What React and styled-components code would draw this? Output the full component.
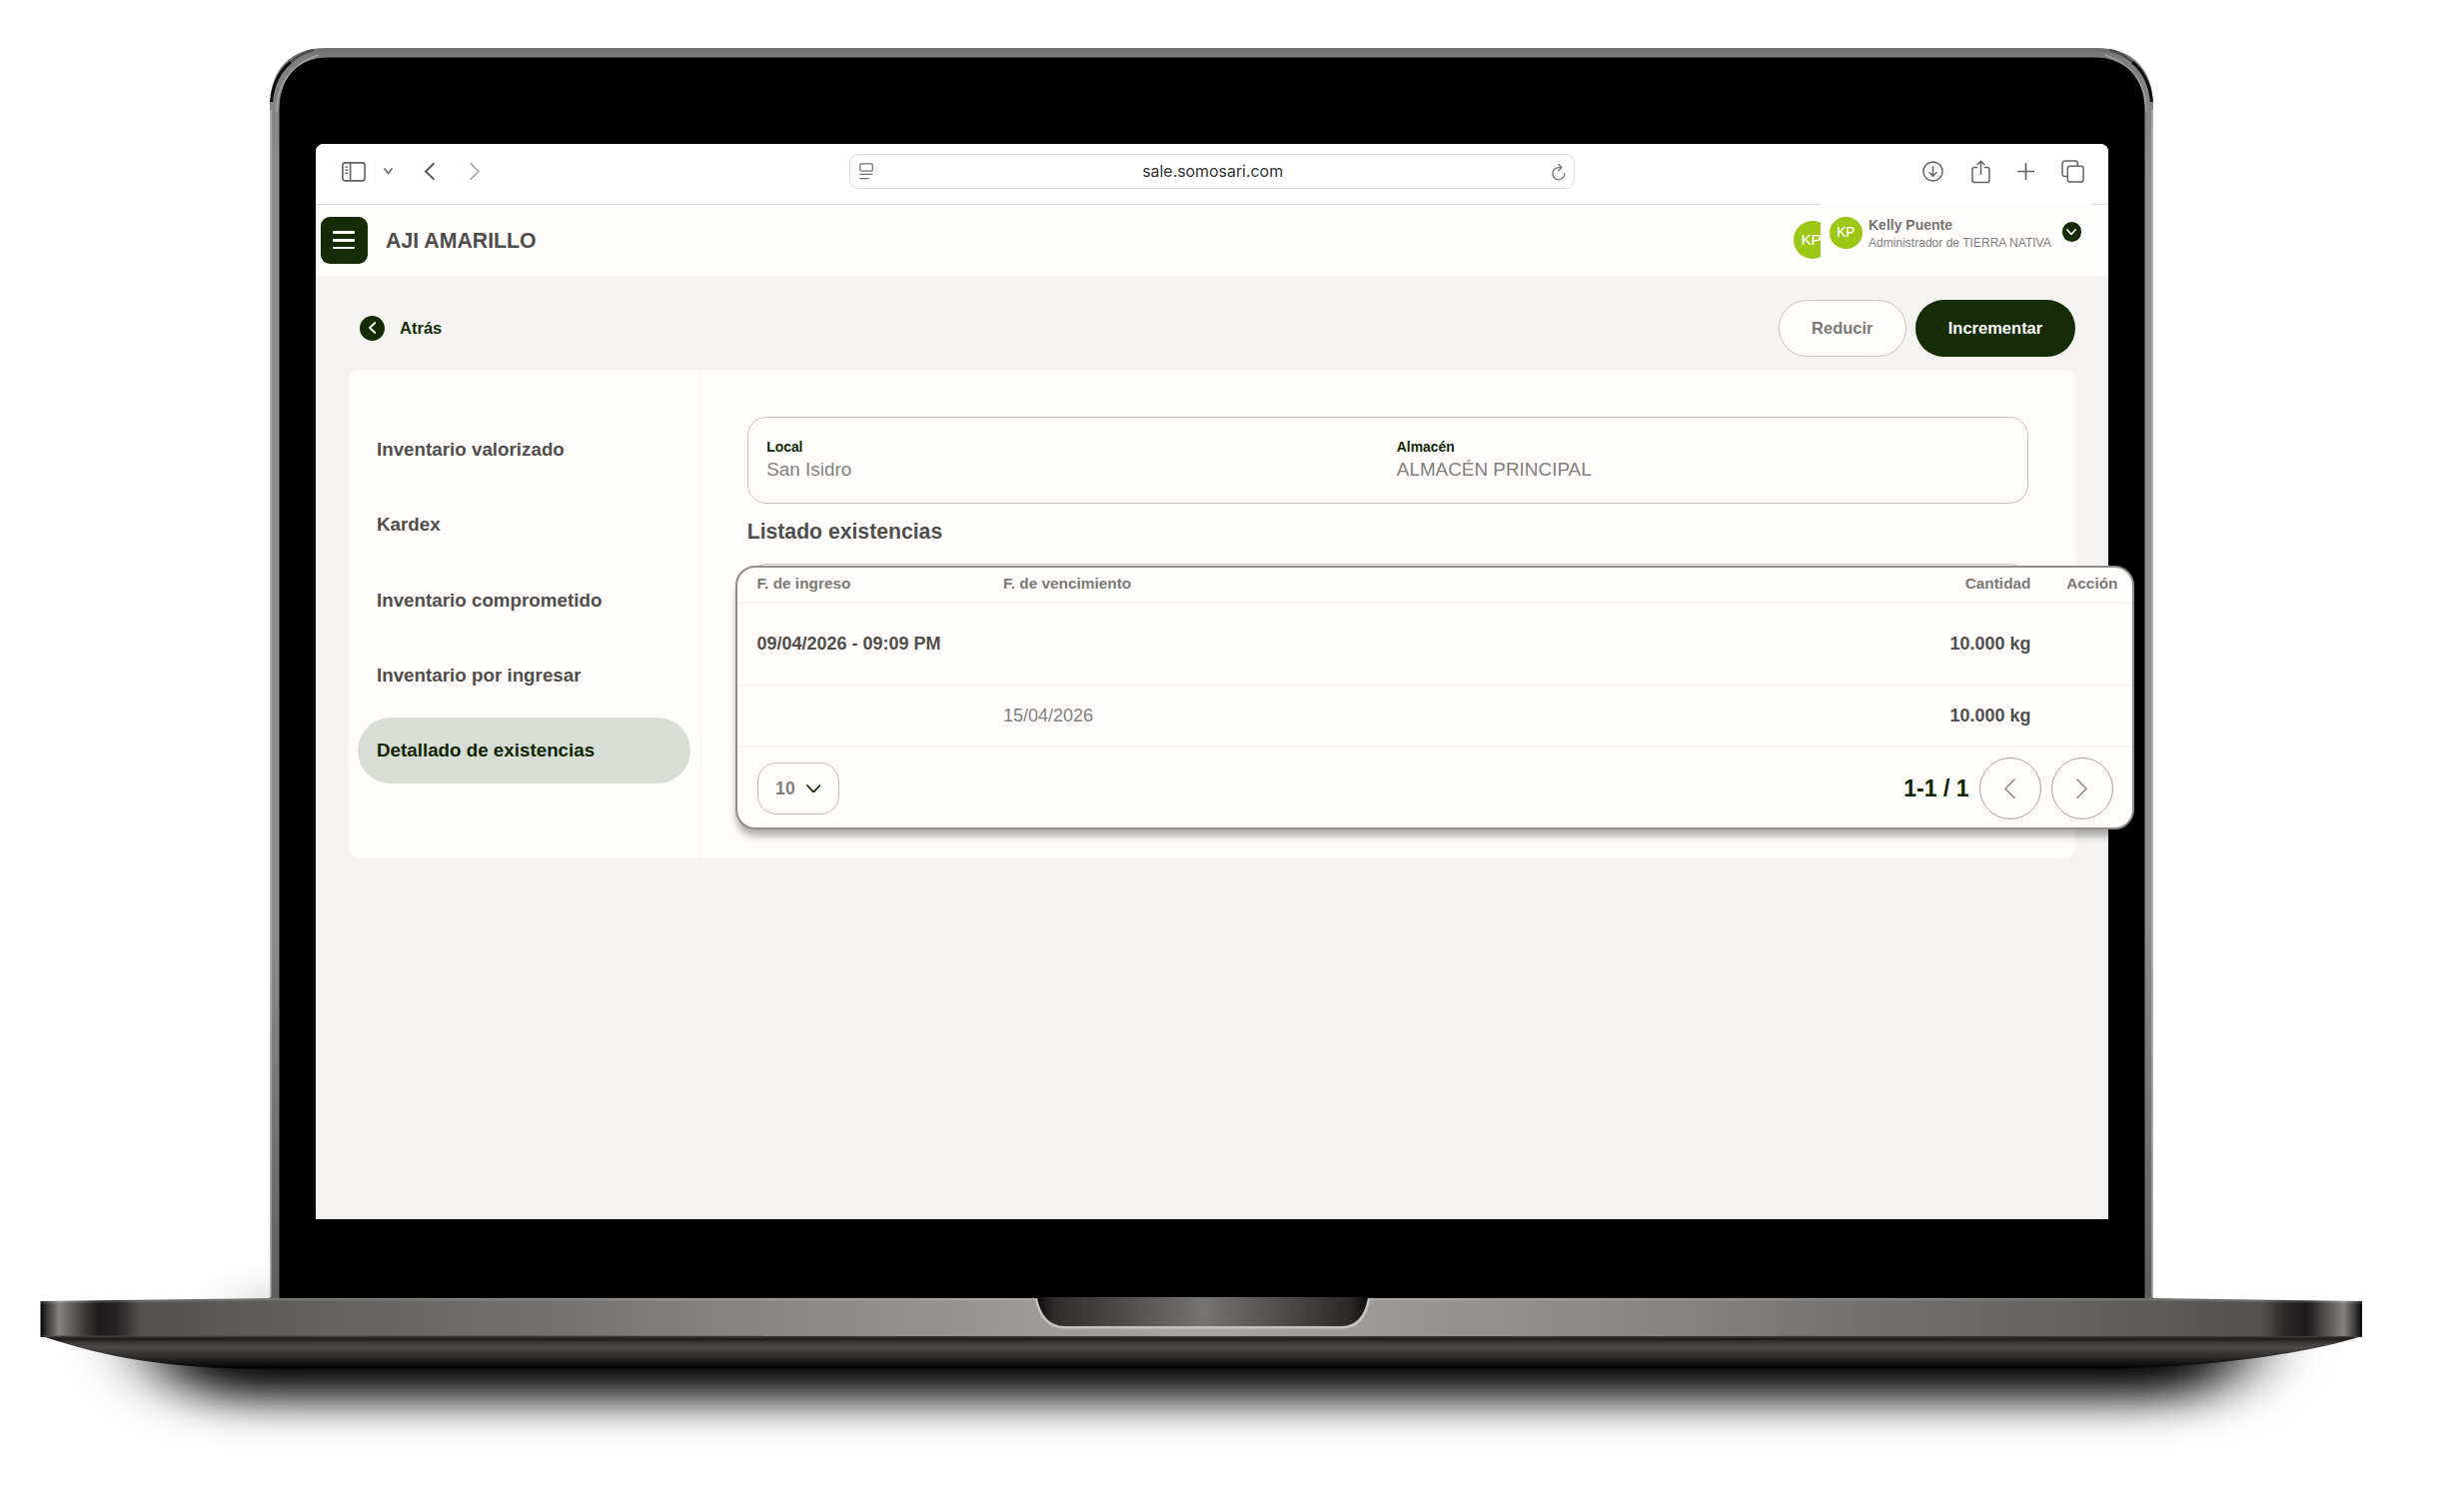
import styled, { createGlobalStyle, css } from "styled-components";

const GlobalStyle = createGlobalStyle`
  * {
    box-sizing: border-box;
  }

  body {
    margin: 0;
    background-color: #fff;
    font-family: "Liberation Sans", Arial, sans-serif;
  }
`;

const dark = "#152c06";
const paper = "#fefdfb";

const Stage = styled.div`
  position: relative;
  width: 2466px;
  height: 1512px;
  padding: 144px 0 0 316px;
  overflow: hidden;
  background-color: #fff;
`;

const LaptopArt = styled.svg`
  position: absolute;
  top: 0;
  left: 0;
`;

const Screen = styled.main`
  position: relative;
  width: 1794px;
  height: 1076px;
  display: flex;
  flex-direction: column;
  overflow: hidden;
  border-radius: 8px 8px 0 0;
  background-color: #f4f3f1;
`;

/* browser bar */
const Toolbar = styled.div`
  height: 61px;
  flex: none;
  display: grid;
  grid-template-columns: 533.6px 726.6px 1fr;
  align-items: center;
  padding-bottom: 5px;
  background-color: #fff;
  border-bottom: 1.5px solid #dedfdf;
`;

const NavIcons = styled.div`
  display: flex;
  align-items: center;
  padding-left: 26px;

  svg {
    display: block;
  }
`;

const Separator = styled.span`
  width: 1px;
  height: 23px;
  margin: 0 8px 0 8.5px;
  background-color: #f0f0f0;
`;

const NavArrow = styled.svg`
  margin-left: ${(props) => props.$gap}px;
`;

const AddressBar = styled.div`
  height: 35.5px;
  display: flex;
  align-items: center;
  justify-content: space-between;
  padding: 0 8px 0 9.5px;
  border: 1.6px solid #dcdcdc;
  border-radius: 9px;

  svg {
    display: block;
  }
`;

const Url = styled.span`
  margin-top: 1px;
  font-family: Inter, sans-serif;
  font-size: 15.9px;
  line-height: 22px;
  color: #333;
`;

const ToolIcons = styled.div`
  display: flex;
  align-items: center;
  justify-content: flex-end;
  gap: 27.2px;
  padding-right: 24px;

  svg {
    display: block;
  }
`;

/* app header */
const Header = styled.header`
  height: 70.5px;
  flex: none;
  display: flex;
  align-items: center;
  padding-left: 5px;
  background-color: ${paper};
`;

const MenuButton = styled.button`
  width: 46.5px;
  height: 47px;
  padding: 0;
  display: flex;
  flex-direction: column;
  align-items: center;
  justify-content: center;
  gap: 5px;
  border: none;
  border-radius: 9px;
  background-color: ${dark};
`;

const MenuLine = styled.span`
  width: 22px;
  height: 2.6px;
  border-radius: 1px;
  background-color: #fff;
`;

const Title = styled.h1`
  margin: 1px 0 0 18.5px;
  font-size: 21.3px;
  line-height: 28px;
  color: #4f4d4b;
`;

const Avatar = styled.div`
  width: ${(props) => props.$size}px;
  height: ${(props) => props.$size}px;
  flex: none;
  display: flex;
  align-items: center;
  justify-content: center;
  border-radius: 50%;
  background-color: #9dc716;
  color: #fff;
  font-size: ${(props) => props.$font}px;
  letter-spacing: -0.3px;
  -webkit-text-stroke: 0.15px #fff;
`;

const HeaderAvatar = styled(Avatar)`
  margin: 0 277px 0 auto;
  padding-right: 3px;
`;

/* floats over the toolbar edge and the avatar in the header */
const ProfileCard = styled.div`
  position: absolute;
  top: 59px;
  left: 1506px;
  width: 272px;
  height: 57px;
  display: flex;
  align-items: flex-start;
  padding: 13.5px 11px 0 9px;
  background-color: ${paper};
`;

const ProfileText = styled.div`
  margin: -2px auto 0 6.5px;
  white-space: nowrap;
`;

const ProfileName = styled.div`
  font-size: 14px;
  font-weight: bold;
  line-height: 20px;
  color: #757371;
`;

const ProfileRole = styled.div`
  margin-top: -1px;
  font-size: 12.05px;
  line-height: 18px;
  color: #7f7d7c;
`;

const RoundIcon = styled.span`
  width: ${(props) => props.$size}px;
  height: ${(props) => props.$size}px;
  margin-top: ${(props) => props.$top || 0}px;
  flex: none;
  display: flex;
  align-items: center;
  justify-content: center;
  border-radius: 50%;
  background-color: ${dark};
`;

/* page */
const Actions = styled.div`
  display: flex;
  align-items: center;
  padding: 24px 33px 13.1px 44.1px;
`;

const BackLink = styled.div`
  display: flex;
  align-items: center;
  gap: 15px;
  margin-right: auto;
  font-size: 16.5px;
  font-weight: bold;
  color: ${dark};
`;

const Button = styled.button`
  width: ${(props) => props.$width}px;
  height: 57.4px;
  padding: 0;
  margin-left: 9px;
  border-radius: 29px;
  font-family: inherit;
  font-size: 16.5px;
  font-weight: bold;
  ${(props) =>
    props.$primary
      ? css`
          border: none;
          background-color: ${dark};
          color: #fff;
        `
      : css`
          border: 1.5px solid #c6c5c4;
          background-color: ${paper};
          color: #7b7977;
        `}
`;

const Card = styled.section`
  height: 488.7px;
  display: flex;
  margin: 0 33px 0 32.8px;
  border-radius: 9px;
  background-color: ${paper};
`;

const SideMenu = styled.nav`
  width: 352px;
  flex: none;
  display: flex;
  flex-direction: column;
  gap: 9.1px;
  padding: 47.4px 9px 0 9.2px;
  border-right: 1.5px solid #f4f3f2;
`;

const MenuItem = styled.a`
  height: 66px;
  display: flex;
  align-items: center;
  padding-left: 19px;
  border-radius: 33px;
  font-size: 18.8px;
  font-weight: bold;
  color: ${(props) => (props.$active ? "#0f2503" : "#504e4c")};
  background-color: ${(props) => (props.$active ? "#d8ddd5" : "transparent")};
`;

const Content = styled.div`
  flex: 1;
  padding: 47px 47px 0 46.9px;
`;

const InfoBox = styled.div`
  height: 87px;
  display: grid;
  grid-template-columns: 630.6px 1fr;
  padding: 19px 0 0 18.5px;
  border: 1.5px solid #c4c3c2;
  border-radius: 19px;
`;

const InfoLabel = styled.div`
  font-size: 13.9px;
  font-weight: bold;
  line-height: 20px;
  color: #0f2503;
`;

const InfoValue = styled.div`
  margin-top: 1px;
  font-size: 18.9px;
  line-height: 24px;
  color: #827f7d;
`;

const SectionTitle = styled.h2`
  margin: 14px 0 18px 0;
  font-size: 21.2px;
  line-height: 28px;
  color: #504e4c;
`;

const ListFrame = styled.div`
  height: 200px;
  border: 1.5px solid #c4c3c2;
  border-radius: 19px;
`;

/* enlarged table lying over the screen and the lid */
const TablePopup = styled.section`
  position: absolute;
  top: 566px;
  left: 736px;
  width: 1400px;
  height: 264px;
  overflow: hidden;
  border: 2px solid #8f8e8d;
  border-radius: 20px;
  background-color: ${paper};
  box-shadow: 0 8px 7px -1px rgba(0, 0, 0, 0.3);
`;

const Row = styled.div`
  height: ${(props) => props.$height}px;
  display: grid;
  grid-template-columns: 246.6px 1fr 200px 87px;
  align-items: center;
  padding: 0 14.5px 0 19.4px;
  border-bottom: 1.5px solid #f3f2f1;
`;

const HeadCell = styled.div`
  padding-bottom: 3.4px;
  font-size: 15.4px;
  font-weight: bold;
  color: #7b7977;
  text-align: ${(props) => props.$align || "left"};
`;

const Cell = styled.div`
  font-size: 18px;
  font-weight: ${(props) => (props.$muted ? "normal" : "bold")};
  color: ${(props) => (props.$muted ? "#827f7d" : "#504e4c")};
  text-align: ${(props) => props.$align || "left"};
`;

const Footer = styled.div`
  height: 80px;
  display: flex;
  align-items: center;
  padding: 2px 19px 0 19.6px;
`;

const PageSize = styled.div`
  width: 82px;
  height: 51.5px;
  display: flex;
  align-items: center;
  gap: 11px;
  margin-right: auto;
  padding-left: 17.5px;
  border: 1.5px solid #bebdbc;
  border-radius: 19px;
  font-size: 17.6px;
  font-weight: bold;
  color: #827f7d;
`;

const PageCount = styled.span`
  margin-right: 10.5px;
  font-size: 23px;
  font-weight: bold;
  color: #0f2503;
`;

const PageButton = styled.button`
  width: 62px;
  height: 62px;
  display: flex;
  align-items: center;
  justify-content: center;
  padding: 0 1px 0 0;
  margin-right: ${(props) => props.$gap || 0}px;
  border: 1.5px solid #a3a2a1;
  border-radius: 50%;
  background-color: transparent;
`;

const menu = [
    "Inventario valorizado",
    "Kardex",
    "Inventario comprometido",
    "Inventario por ingresar",
    "Detallado de existencias",
];

const rows = [
    { entry: "09/04/2026 - 09:09 PM", expiry: "", amount: "10.000 kg", height: 82 },
    { entry: "", expiry: "15/04/2026", amount: "10.000 kg", height: 62 },
];

const Chevron = ({ dir = "down", w, h, color, stroke = 2 }) => {
    const points = {
        down: `1,1 ${w / 2},${h - 1} ${w - 1},1`,
        left: `${w - 1},1 1,${h / 2} ${w - 1},${h - 1}`,
        right: `1,1 ${w - 1},${h / 2} 1,${h - 1}`,
    };
    return (
        <svg width={w} height={h} fill="none" stroke={color} strokeWidth={stroke} strokeLinecap="round" strokeLinejoin="round">
            <polyline points={points[dir]} />
        </svg>
    );
};

const Laptop = () => (
    <LaptopArt width="2466" height="1512" viewBox="0 0 2466 1512">
        <defs>
            <linearGradient id="side" x1="0" y1="0" x2="0" y2="1">
                <stop offset="0" stopColor="#6d6f6d" />
                <stop offset="0.008" stopColor="#7e7e7d" />
                <stop offset="0.1" stopColor="#8f8d8d" />
                <stop offset="0.7" stopColor="#8f8d8d" />
                <stop offset="1" stopColor="#5c5d5d" />
            </linearGradient>
            <linearGradient id="strip" gradientUnits="userSpaceOnUse" x1="40.5" y1="0" x2="2364" y2="0">
                <stop offset="0" stopColor="#050505" />
                <stop offset="0.003" stopColor="#3c3b3a" />
                <stop offset="0.008" stopColor="#85827f" />
                <stop offset="0.015" stopColor="#55524f" />
                <stop offset="0.025" stopColor="#1b1919" />
                <stop offset="0.033" stopColor="#262424" />
                <stop offset="0.043" stopColor="#52514f" />
                <stop offset="0.1" stopColor="#5f5e5b" />
                <stop offset="0.23" stopColor="#757371" />
                <stop offset="0.29" stopColor="#868280" />
                <stop offset="0.41" stopColor="#9a9693" />
                <stop offset="0.5" stopColor="#a8a5a2" />
                <stop offset="0.59" stopColor="#9a9693" />
                <stop offset="0.71" stopColor="#868280" />
                <stop offset="0.77" stopColor="#757371" />
                <stop offset="0.9" stopColor="#5f5e5b" />
                <stop offset="0.957" stopColor="#52514f" />
                <stop offset="0.967" stopColor="#2b2a29" />
                <stop offset="0.976" stopColor="#1b1919" />
                <stop offset="0.985" stopColor="#55524f" />
                <stop offset="0.992" stopColor="#85827f" />
                <stop offset="0.997" stopColor="#3c3b3a" />
                <stop offset="1" stopColor="#050505" />
            </linearGradient>
            <linearGradient id="under" x1="0" y1="0" x2="0" y2="1">
                <stop offset="0" stopColor="#4a4644" />
                <stop offset="0.1" stopColor="#1d1c1b" />
                <stop offset="0.2" stopColor="#3a3736" />
                <stop offset="0.35" stopColor="#4c4847" />
                <stop offset="0.6" stopColor="#32312f" />
                <stop offset="0.95" stopColor="#070606" />
                <stop offset="1" stopColor="#050404" />
            </linearGradient>
            <linearGradient id="notch" x1="0" y1="0" x2="1" y2="0">
                <stop offset="0" stopColor="#0c0a0a" />
                <stop offset="0.05" stopColor="#2f2c2b" />
                <stop offset="0.25" stopColor="#4d4a49" />
                <stop offset="0.5" stopColor="#767472" />
                <stop offset="0.75" stopColor="#4d4a49" />
                <stop offset="0.95" stopColor="#2a2726" />
                <stop offset="1" stopColor="#0c0a0a" />
            </linearGradient>
            <radialGradient id="haze" cx="1" cy="1" r="1">
                <stop offset="0" stopColor="#000" stopOpacity="0.11" />
                <stop offset="0.5" stopColor="#000" stopOpacity="0.035" />
                <stop offset="1" stopColor="#000" stopOpacity="0" />
            </radialGradient>
            <filter id="soft" filterUnits="userSpaceOnUse" x="0" y="1200" width="2466" height="312">
                <feGaussianBlur stdDeviation="38 22" />
            </filter>
            <clipPath id="floor">
                <rect x="0" y="1350" width="2466" height="162" />
            </clipPath>
        </defs>

        <g clipPath="url(#floor)">
            <path d="M140 1320H2260C2250 1372 2220 1400 2160 1400H242C182 1400 152 1372 140 1320Z" filter="url(#soft)" />
        </g>
        <rect x="190" y="1262" width="80" height="38" fill="url(#haze)" />

        <path d="M270 1299V106C270 68 292 48 326 48H2099C2133 48 2155 68 2155 106V1299Z" fill="url(#side)" />
        <path d="M271.6 102C273 84 280 71 291 62" fill="none" stroke="#0c0c0c" strokeWidth="3" />
        <path d="M291 62C298 56 305 52 314 50" fill="none" stroke="#4a4a4a" strokeWidth="2.4" />
        <path d="M2153.4 102C2152 84 2145 71 2134 62" fill="none" stroke="#0c0c0c" strokeWidth="3" />
        <path d="M2134 62C2127 56 2120 52 2111 50" fill="none" stroke="#4a4a4a" strokeWidth="2.4" />
        <path d="M277 112C277 82 292 65 318 55" fill="none" stroke="#a3a3a3" strokeWidth="1.5" />
        <path d="M2148 112C2148 82 2133 65 2107 55" fill="none" stroke="#a3a3a3" strokeWidth="1.5" />
        <path d="M270.8 110V1298M2154.2 110V1298" stroke="#bdbcbc" strokeWidth="1.4" />
        <path d="M279.5 1299V110C279.5 76 300 57.5 328 57.5H2097C2125 57.5 2146.5 76 2146.5 110V1299Z" />

        <path d="M40.5 1302L272 1299H2154L2364 1302V1338H40.5Z" fill="url(#strip)" />
        <path d="M41 1303L272 1300H2154L2364 1303" fill="none" stroke="#fff" strokeOpacity="0.13" strokeWidth="3" />
        <path d="M40.5 1336.5C92 1354 150 1367 236 1369.5H2124C2220 1367 2310 1354 2364 1337Z" fill="url(#under)" />

        <path d="M1037 1300C1041 1318 1049 1328.5 1065 1328.5H1343C1359 1328.5 1367 1318 1370 1300" fill="none" stroke="#c4c2c0" strokeWidth="2.6" />
        <path d="M1038 1298C1041 1315 1050 1327 1066 1327H1342C1358 1327 1366 1315 1369 1298Z" fill="url(#notch)" />
    </LaptopArt>
);

const BrowserBar = () => (
    <Toolbar>
        <NavIcons>
            <svg width="24" height="20" fill="none" stroke="#5f5f5f" strokeWidth="1.6">
                <rect x="0.9" y="0.9" width="22.2" height="18" rx="2.6" />
                <path d="M8.6 1V19" />
                <path d="M3.2 5.2H6.2M3.2 8.2H6.2M3.2 11.2H6.2" strokeWidth="1.2" />
            </svg>
            <Separator />
            <Chevron w={9} h={6.5} color="#6c6c6c" stroke={1.8} />
            <NavArrow $gap={31} width="12" height="19" fill="none" stroke="#5a5a5a" strokeWidth="1.9">
                <path d="M10.5 1.2L2 9.5L10.5 17.8" />
            </NavArrow>
            <NavArrow $gap={33} width="12" height="19" fill="none" stroke="#adadad" strokeWidth="1.8">
                <path d="M1.5 1.2L10 9.5L1.5 17.8" />
            </NavArrow>
        </NavIcons>
        <AddressBar>
            <svg width="14" height="17" fill="none" stroke="#727272" strokeWidth="1.3">
                <rect x="0.8" y="0.8" width="12.4" height="7.4" rx="1.4" />
                <path d="M0.5 11.4H13.5M0.5 15.6H9.8" />
            </svg>
            <Url>sale.somosari.com</Url>
            <svg width="14" height="18" fill="none" stroke="#767676" strokeWidth="1.4">
                <path d="M12.9 10.4A6 6 0 1 1 7 4.6H9.6" />
                <path d="M6.4 1L9.8 4.6L6.4 8" />
            </svg>
        </AddressBar>
        <ToolIcons>
            <svg width="21" height="21" fill="none" stroke="#626262" strokeWidth="1.5">
                <circle cx="10.5" cy="10.5" r="9.6" />
                <path d="M10.5 5.4V15M6.6 11.2L10.5 15.2L14.4 11.2" />
            </svg>
            <svg width="19" height="24" fill="none" stroke="#626262" strokeWidth="1.5">
                <path d="M6.2 7.5H3A2 2 0 0 0 1 9.5V20.5A2 2 0 0 0 3 22.5H16A2 2 0 0 0 18 20.5V9.5A2 2 0 0 0 16 7.5H12.8" />
                <path d="M9.5 15V1.5M5.7 5L9.5 1.3L13.3 5" />
            </svg>
            <svg width="17" height="17" stroke="#626262" strokeWidth="1.7">
                <path d="M8.5 0V17M0 8.5H17" />
            </svg>
            <svg width="23" height="23" fill="none" stroke="#626262" strokeWidth="1.5">
                <rect x="6.3" y="6.2" width="15.8" height="15.8" rx="2.6" />
                <path d="M6 16.4H3.6A2.6 2.6 0 0 1 1 13.8V3.6A2.6 2.6 0 0 1 3.6 1H13.8A2.6 2.6 0 0 1 16.4 3.6V6" />
            </svg>
        </ToolIcons>
    </Toolbar>
);

const StockTable = () => (
    <TablePopup>
        <Row $height={36}>
            <HeadCell>F. de ingreso</HeadCell>
            <HeadCell>F. de vencimiento</HeadCell>
            <HeadCell $align="right">Cantidad</HeadCell>
            <HeadCell $align="right">Acción</HeadCell>
        </Row>
        {rows.map((row) => (
            <Row key={row.height} $height={row.height}>
                <Cell>{row.entry}</Cell>
                <Cell $muted>{row.expiry}</Cell>
                <Cell $align="right">{row.amount}</Cell>
            </Row>
        ))}
        <Footer>
            <PageSize>
                10
                <Chevron w={14.5} h={8.6} color={dark} stroke={1.8} />
            </PageSize>
            <PageCount>1-1 / 1</PageCount>
            <PageButton $gap={10}>
                <Chevron dir="left" w={11} h={20.5} color="#8b8a89" stroke={1.6} />
            </PageButton>
            <PageButton>
                <Chevron dir="right" w={11} h={20.5} color="#8b8a89" stroke={1.6} />
            </PageButton>
        </Footer>
    </TablePopup>
);

const App = () => {
    return (
        <>
            <GlobalStyle />
            <Stage>
                <Laptop />
                <Screen>
                    <BrowserBar />
                    <Header>
                        <MenuButton>
                            <MenuLine />
                            <MenuLine />
                            <MenuLine />
                        </MenuButton>
                        <Title>AJI AMARILLO</Title>
                        <HeaderAvatar $size={38} $font={15.5}>KP</HeaderAvatar>
                    </Header>
                    <Actions>
                        <BackLink>
                            <RoundIcon $size={25}>
                                <Chevron dir="left" w={7.5} h={12} color="#fff" stroke={1.9} />
                            </RoundIcon>
                            Atrás
                        </BackLink>
                        <Button $width={128.4}>Reducir</Button>
                        <Button $width={160} $primary>Incrementar</Button>
                    </Actions>
                    <Card>
                        <SideMenu>
                            {menu.map((item, i) => (
                                <MenuItem key={item} $active={i === 4}>{item}</MenuItem>
                            ))}
                        </SideMenu>
                        <Content>
                            <InfoBox>
                                <div>
                                    <InfoLabel>Local</InfoLabel>
                                    <InfoValue>San Isidro</InfoValue>
                                </div>
                                <div>
                                    <InfoLabel>Almacén</InfoLabel>
                                    <InfoValue>ALMACÉN PRINCIPAL</InfoValue>
                                </div>
                            </InfoBox>
                            <SectionTitle>Listado existencias</SectionTitle>
                            <ListFrame />
                        </Content>
                    </Card>
                    <ProfileCard>
                        <Avatar $size={32.5} $font={13.8}>KP</Avatar>
                        <ProfileText>
                            <ProfileName>Kelly Puente</ProfileName>
                            <ProfileRole>Administrador de TIERRA NATIVA</ProfileRole>
                        </ProfileText>
                        <RoundIcon $size={19.5} $top={5.5}>
                            <Chevron w={10} h={6.5} color="#fff" stroke={1.7} />
                        </RoundIcon>
                    </ProfileCard>
                </Screen>
                <StockTable />
            </Stage>
        </>
    );
};

export default App;
